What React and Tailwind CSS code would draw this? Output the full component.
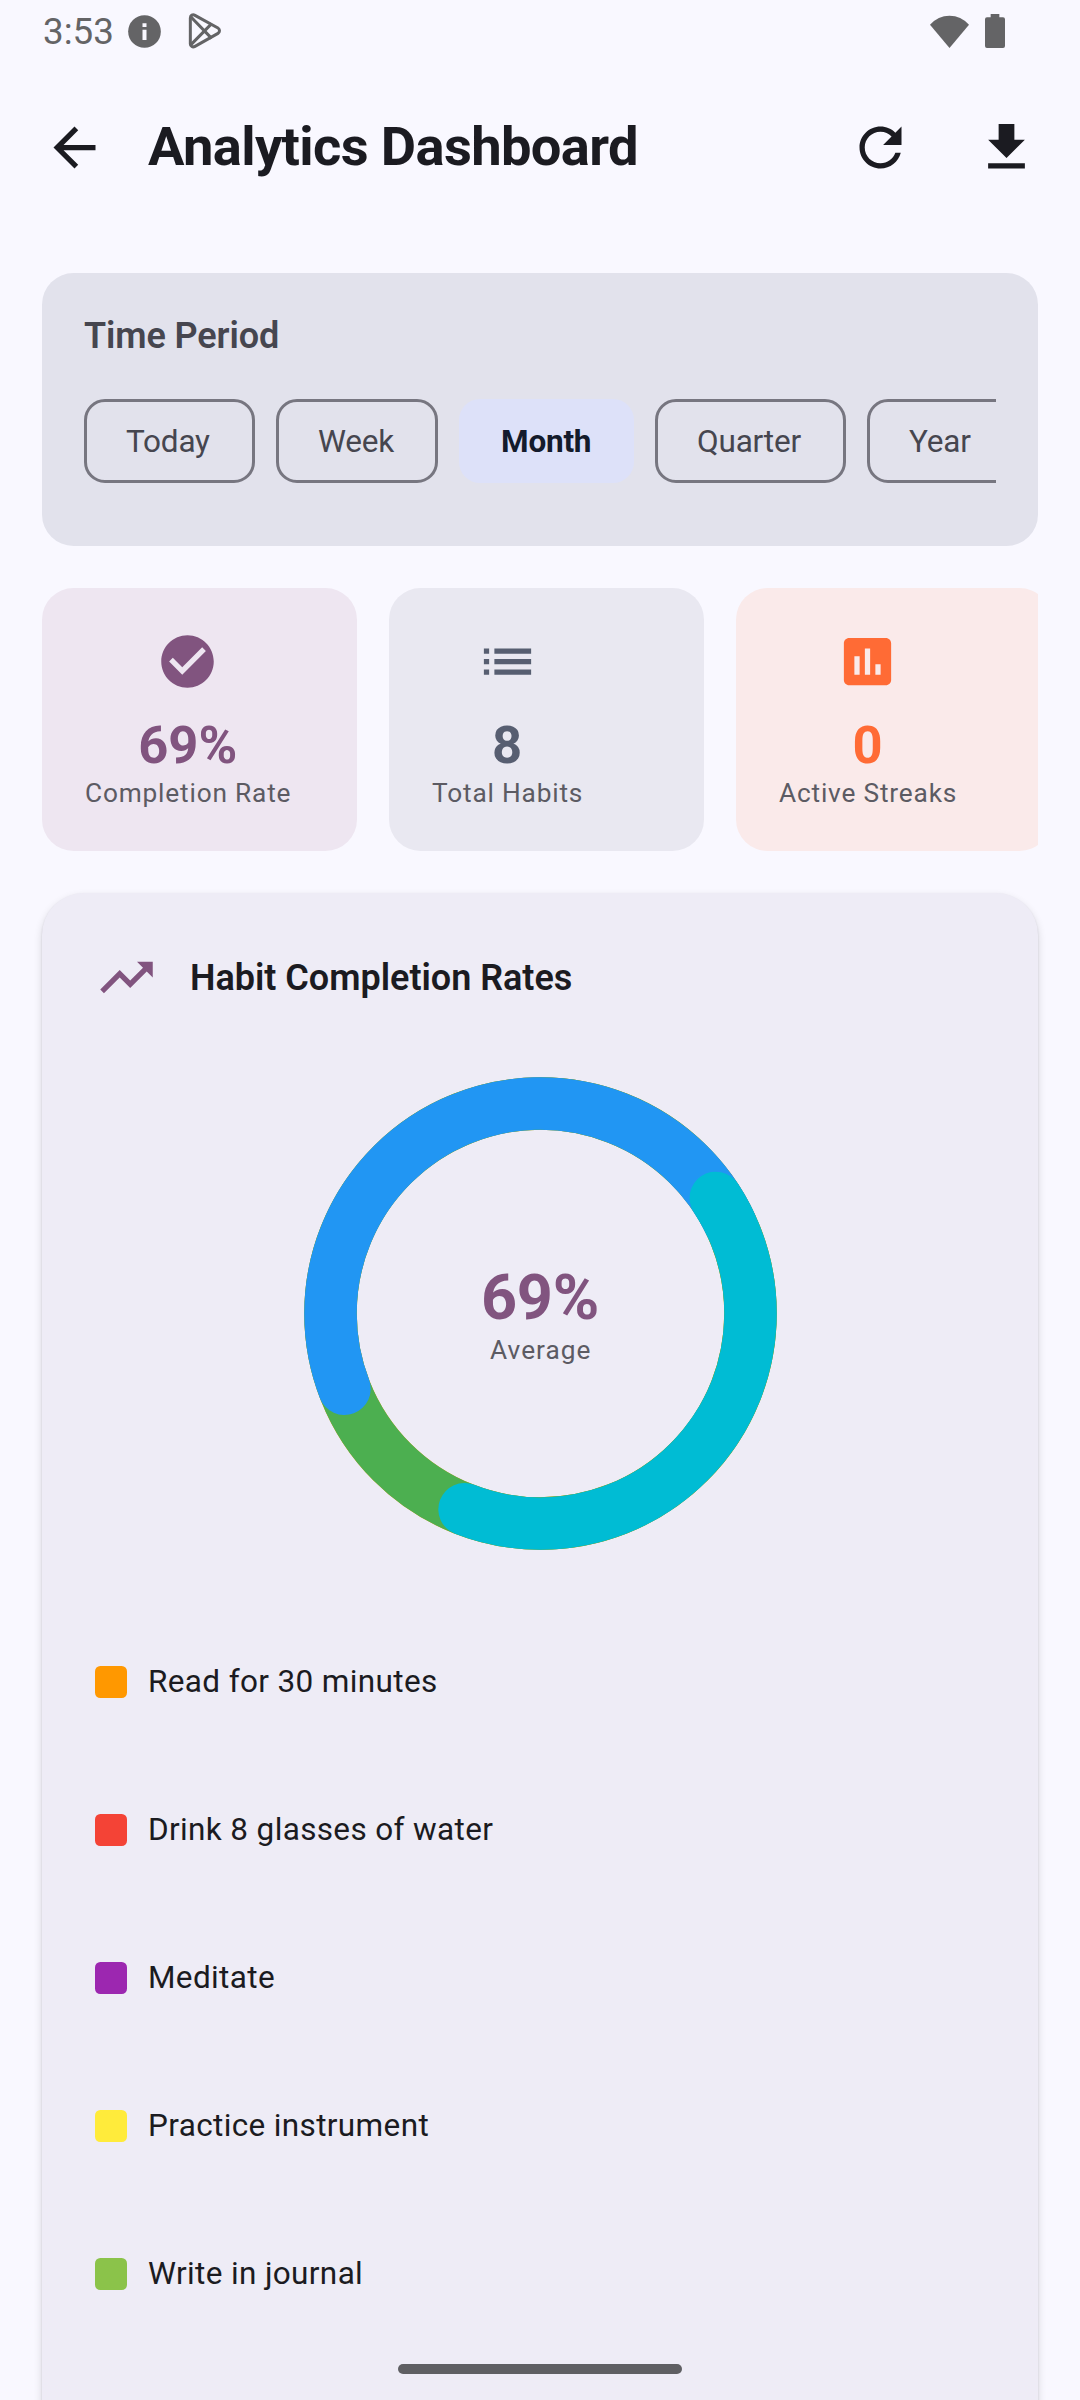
const ICONS = {
  back: "M20 11H7.83l5.59-5.59L12 4l-8 8 8 8 1.41-1.41L7.83 13H20v-2z",
  refresh:
    "M17.65 6.35C16.2 4.9 14.21 4 12 4c-4.42 0-7.99 3.58-7.99 8s3.57 8 7.99 8c3.73 0 6.84-2.55 7.73-6h-2.08c-.82 2.33-3.04 4-5.65 4-3.31 0-6-2.69-6-6s2.69-6 6-6c1.66 0 3.14.69 4.22 1.78L13 11h7V4l-2.35 2.35z",
  download: "M19 9h-4V3H9v6H5l7 7 7-7zM5 18v2h14v-2H5z",
  check:
    "M12 2C6.48 2 2 6.48 2 12s4.48 10 10 10 10-4.48 10-10S17.52 2 12 2zm-2 15l-5-5 1.41-1.41L10 14.17l7.59-7.59L19 8l-9 9z",
  list: "M3 13h2v-2H3v2zm0 4h2v-2H3v2zm0-8h2V7H3v2zm4 4h14v-2H7v2zm0 4h14v-2H7v2zM7 7v2h14V7H7z",
  chart:
    "M19 3H5c-1.1 0-2 .9-2 2v14c0 1.1.9 2 2 2h14c1.1 0 2-.9 2-2V5c0-1.1-.9-2-2-2zM9 17H7v-7h2v7zm4 0h-2V7h2v10zm4 0h-2v-4h2v4z",
  trending: "M16 6l2.29 2.29-4.88 4.88-4-4L2 16.59 3.41 18l6-6 4 4 6.3-6.29L22 12V6z",
};

function Icon({ name, className = "" }) {
  return (
    <svg viewBox="0 0 24 24" fill="currentColor" className={`size-[63px] shrink-0 ${className}`}>
      <path d={ICONS[name]} />
    </svg>
  );
}

function StatusBar() {
  return (
    <div className="flex h-[62px] items-center text-[#646466]">
      <span className="ml-[43px] w-[85px] pt-px text-[36.75px] leading-[62px]">3:53</span>
      <svg viewBox="0 0 99 99" className="mt-px size-[33px]">
        <circle cx="49.5" cy="49.5" r="49" fill="currentColor" />
        <path d="M43.5 25h12v11h-12zM43.5 44h12v31h-12z" fill="#f9f8ff" />
      </svg>
      <svg
        viewBox="0 0 102 108"
        fill="none"
        stroke="currentColor"
        strokeWidth="9"
        strokeLinejoin="round"
        className="ml-[27px] h-[36px] w-[34px]"
      >
        <path d="M7 15C7 7 14 3 21 7L90 45Q99 53 90 61L21 100C14 104 7 100 7 93Z" />
        <path d="M9 12L71 76M9 95L71 32" />
      </svg>
      <svg viewBox="0 0 117 99" fill="currentColor" className="ml-auto h-[33px] w-[39px]">
        <path d="M0 29Q24 2 58.500 2T117 29L58.500 99Z" />
      </svg>
      <svg viewBox="0 0 60 102" fill="currentColor" className="mr-[75px] ml-[16px] h-[34px] w-[20px]">
        <path d="M17 0H43V10H54Q60 10 60 16V96Q60 102 54 102H6Q0 102 0 96V16Q0 10 6 10H17Z" />
      </svg>
    </div>
  );
}

function Header() {
  return (
    <header className="flex h-[168px] items-center pr-[11px] pl-[11px] text-[#1b1b21]">
      <button className="flex size-[126px] items-center justify-center pt-[3px]">
        <Icon name="back" />
      </button>
      <h1 className="ml-[11px] grow text-[54.3px] leading-[63px] font-bold tracking-[-0.64px]">
        Analytics Dashboard
      </h1>
      <button className="flex size-[126px] items-center justify-center pt-[3px]">
        <Icon name="refresh" />
      </button>
      <button className="flex size-[126px] items-center justify-center pt-[3px]">
        <Icon name="download" />
      </button>
    </header>
  );
}

const PERIODS = [
  { label: "Today", width: "w-[171px]" },
  { label: "Week", width: "w-[162px]" },
  { label: "Month", width: "w-[175px]", active: true },
  { label: "Quarter", width: "w-[191px]" },
  { label: "Year", width: "w-[150px]" },
];

function TimePeriod() {
  return (
    <section className="mx-[42px] h-[273px] rounded-[31.5px] bg-[#e2e2ec] p-[42px]">
      <h2 className="text-[36px] leading-[42px] font-[560] tracking-[-0.1px] text-[#46464f]">Time Period</h2>
      <div className="mt-[42px] flex gap-[21px] overflow-hidden">
        {PERIODS.map(({ label, width, active }) => (
          <button
            key={label}
            className={`flex h-[84px] shrink-0 items-center rounded-[21px] text-[31.5px] ${width} ${
              active
                ? "bg-[#dde1f9] pt-px pl-[42px] font-bold tracking-[-0.2px] text-[#141b2c]"
                : "border-[3px] border-[#777680] pt-px pl-[39px] tracking-[-0.2px] text-[#46464f]"
            }`}
          >
            {label}
          </button>
        ))}
      </div>
    </section>
  );
}

const STATS = [
  { icon: "check", value: "69%", label: "Completion Rate", bg: "bg-[#eee6f1]", color: "text-[#81547f]" },
  { icon: "list", value: "8", label: "Total Habits", bg: "bg-[#e9e8f1]", color: "text-[#575e71]" },
  { icon: "chart", value: "0", label: "Active Streaks", bg: "bg-[#faeaea]", color: "text-[#ff6b35]" },
];

function Stats() {
  return (
    <section className="mx-[42px] mt-[42px] flex gap-[32px] overflow-hidden">
      {STATS.map(({ icon, value, label, bg, color }) => (
        <div
          key={label}
          className={`flex h-[263px] w-[315px] shrink-0 items-start rounded-[31.5px] py-[42px] pl-[42px] ${bg}`}
        >
          <div className="flex flex-col items-center">
            <Icon name={icon} className={color} />
            <div className={`mt-[21px] text-[52.5px] leading-[63px] font-bold ${color}`}>{value}</div>
            <div className="pt-px pl-px text-[26.25px] leading-[31px] tracking-[0.82px] whitespace-nowrap text-[#5c5b63]">
              {label}
            </div>
          </div>
        </div>
      ))}
    </section>
  );
}

const point = (deg) => {
  const a = (deg * Math.PI) / 180;
  return `${262.5 + 210 * Math.cos(a)} ${262.5 + 210 * Math.sin(a)}`;
};

function Arc({ from, to, color }) {
  return (
    <path
      d={`M${point(from)}A210 210 0 ${to - from > 180 ? 1 : 0} 1 ${point(to)}`}
      fill="none"
      stroke={color}
      strokeWidth="52.5"
      strokeLinecap="round"
    />
  );
}

function Donut() {
  return (
    <div className="relative mx-auto mt-[42px] size-[525px]">
      <svg viewBox="0 0 525 525" className="size-full">
        <circle cx="262.5" cy="262.5" r="210" fill="none" stroke="#ff9800" strokeWidth="52.5" />
        <circle cx="262.5" cy="262.5" r="210" fill="none" stroke="#4caf50" strokeWidth="52.5" />
        <Arc from={159} to={335} color="#2196f3" />
        <Arc from={-33.4} to={111.2} color="#00bcd4" />
      </svg>
      <div className="absolute inset-0 flex flex-col items-center justify-center">
        <div className="text-[63px] leading-[74px] font-bold tracking-[-0.3px] text-[#81547f]">69%</div>
        <div className="pl-[1.5px] text-[26.25px] leading-[31px] tracking-[1px] text-[#5c5b63]">Average</div>
      </div>
    </div>
  );
}

const HABITS = [
  { name: "Read for 30 minutes", color: "bg-[#ff9800]" },
  { name: "Drink 8 glasses of water", color: "bg-[#f44336]" },
  { name: "Meditate", color: "bg-[#9c27b0]" },
  { name: "Practice instrument", color: "bg-[#ffeb3b]" },
  { name: "Write in journal", color: "bg-[#8bc34a]" },
];

function CompletionRates() {
  return (
    <section className="mx-[42px] mt-[42px] h-[1700px] rounded-[42px] bg-[#eeecf6] px-[53px] pt-[53px] shadow-[0_1px_2px_rgba(0,0,0,0.12),0_4px_8px_rgba(0,0,0,0.14)]">
      <div className="flex items-center gap-[32px]">
        <Icon name="trending" className="text-[#81547f]" />
        <h2 className="pt-[2px] text-[36px] leading-[61px] font-[560] tracking-[-0.02px] text-[#1b1b21]">
          Habit Completion Rates
        </h2>
      </div>
      <Donut />
      <ul className="mt-[90px] flex flex-col gap-[116px]">
        {HABITS.map(({ name, color }) => (
          <li key={name} className="flex h-[32px] items-center gap-[21px]">
            <span className={`size-[32px] rounded-[5.25px] ${color}`} />
            <span className="text-[31.5px] leading-[32px] tracking-[0.36px] text-[#1b1b21]">{name}</span>
          </li>
        ))}
      </ul>
    </section>
  );
}

export default function App() {
  return (
    <div className="relative h-[2400px] w-[1080px] overflow-hidden bg-[#f9f8ff] font-['Roboto',sans-serif]">
      <StatusBar />
      <Header />
      <main className="pt-[43px]">
        <TimePeriod />
        <Stats />
        <CompletionRates />
      </main>
      <div className="absolute bottom-[26px] left-1/2 h-[10px] w-[284px] -translate-x-1/2 rounded-full bg-[#5f5f63]" />
    </div>
  );
}
